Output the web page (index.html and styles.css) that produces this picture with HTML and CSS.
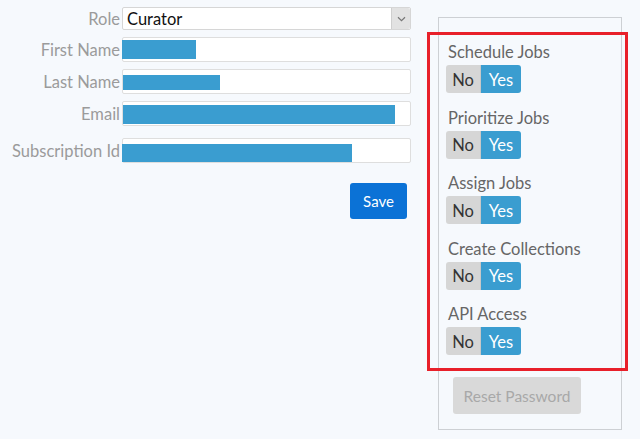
FILE: index.html
```html
<!DOCTYPE html>
<html>
<head>
<meta charset="utf-8">
<link rel="stylesheet" href="styles.css">
</head>
<body>
<div class="page">
  <div class="form">
    <div class="row">
      <div class="label">Role</div>
      <div class="field select">
        <span class="select-value">Curator</span>
        <span class="select-arrow">
          <svg width="9" height="6" viewBox="0 0 9 6"><path d="M1 1.2 L4.5 4.6 L8 1.2" fill="none" stroke="#777" stroke-width="1.2"/></svg>
        </span>
      </div>
    </div>
    <div class="row row-gap">
      <div class="label">First Name</div>
      <div class="field"><div class="bar bar-first" style="width:74px"></div></div>
    </div>
    <div class="row row-gap">
      <div class="label">Last Name</div>
      <div class="field"><div class="bar bar-last" style="width:97px"></div></div>
    </div>
    <div class="row row-gap">
      <div class="label">Email</div>
      <div class="field"><div class="bar bar-email" style="width:272px"></div></div>
    </div>
    <div class="row row-gap-lg">
      <div class="label">Subscription Id</div>
      <div class="field"><div class="bar bar-sub" style="width:230px"></div></div>
    </div>
    <button class="save">Save</button>
  </div>
  <div class="panel">
    <div class="perms">
      <div class="perm">
        <div class="perm-label">Schedule Jobs</div>
        <div class="toggle"><span class="no">No</span><span class="yes">Yes</span></div>
      </div>
      <div class="perm">
        <div class="perm-label">Prioritize Jobs</div>
        <div class="toggle"><span class="no">No</span><span class="yes">Yes</span></div>
      </div>
      <div class="perm">
        <div class="perm-label">Assign Jobs</div>
        <div class="toggle"><span class="no">No</span><span class="yes">Yes</span></div>
      </div>
      <div class="perm">
        <div class="perm-label">Create Collections</div>
        <div class="toggle"><span class="no">No</span><span class="yes">Yes</span></div>
      </div>
      <div class="perm">
        <div class="perm-label">API Access</div>
        <div class="toggle"><span class="no">No</span><span class="yes">Yes</span></div>
      </div>
    </div>
    <button class="reset">Reset Password</button>
  </div>
</div>
</body>
</html>
```

FILE: styles.css
```css
html, body {
  margin: 0;
  padding: 0;
}
body {
  background: #f6f9fd;
  font-family: Lato, "Open Sans", sans-serif;
  font-size: 16.5px;
  width: 640px;
  height: 439px;
  overflow: hidden;
}
.page {
  display: flex;
  align-items: flex-start;
}
.form {
  width: 411px;
  padding-top: 7px;
  display: flex;
  flex-direction: column;
}
.row {
  display: flex;
  align-items: center;
}
.row-gap { margin-top: 7px; }
.row-gap-lg { margin-top: 12px; }
.label {
  width: 120px;
  margin-right: 2px;
  text-align: right;
  color: #9b9b9b;
  white-space: nowrap;
  line-height: 20px;
  padding-top: 1px;
}
.field {
  box-sizing: border-box;
  width: 289px;
  height: 25px;
  background: #fff;
  border: 1px solid #dedede;
  border-radius: 2px;
  position: relative;
}
.select {
  height: 23px;
  display: flex;
  align-items: center;
  border-color: #d6d6d6;
}
.select-value {
  flex: 1;
  padding-left: 4px;
  color: #111;
  line-height: 20px;
  padding-top: 1px;
}
.select-arrow {
  width: 18px;
  height: 21px;
  background: #e2e2e2;
  border-left: 1px solid #cfcfcf;
  display: flex;
  align-items: center;
  justify-content: center;
  border-radius: 0 2px 2px 0;
}
.bar {
  background: #3a9dd0;
  margin-left: -1px;
}
.bar-first { margin-top: 2px; height: 19px; }
.bar-last { margin-top: 5px; margin-left: 0; height: 15px; }
.bar-email { margin-top: 3px; margin-left: 0; height: 19px; }
.bar-sub { margin-top: 5px; height: 18px; }
.save {
  align-self: flex-end;
  margin-top: 20px;
  margin-right: 4px;
  width: 57px;
  height: 36px;
  border: none;
  border-radius: 3px;
  background: #0b72d6;
  color: #fff;
  font-family: Lato, sans-serif;
  font-size: 15px;
  padding: 0;
}
.panel {
  box-sizing: border-box;
  margin-left: 27px;
  margin-top: 17px;
  width: 184px;
  height: 413px;
  border: 1px solid #cdd0d4;
  padding-top: 14px;
}
.perms {
  border: 3px solid #e8202a;
  margin: 0 -7px 0 -12px;
  padding: 6px 0 13px 16px;
}
.perm + .perm {
  margin-top: 13.5px;
}
.perm-label {
  color: #666;
  line-height: 20px;
  margin-left: 2px;
  margin-bottom: 4px;
  white-space: nowrap;
  padding-top: 1px;
  height: 19px;
}
.toggle {
  display: flex;
  width: 75px;
  height: 28px;
  border-radius: 3px;
  overflow: hidden;
}
.toggle span {
  display: flex;
  align-items: center;
  justify-content: center;
  line-height: 28px;
  padding-top: 1px;
  box-sizing: border-box;
}
.no {
  width: 35px;
  background: #d6d6d6;
  color: #333;
  border-right: 1px solid #c8c8c8;
}
.yes {
  width: 40px;
  background: #3a9dd0;
  color: #fff;
}
.reset {
  display: block;
  margin: 6px 0 0 14px;
  width: 128px;
  height: 37px;
  border: none;
  border-radius: 3px;
  background: #d9d9d9;
  color: #a8a8a8;
  font-family: Lato, sans-serif;
  font-size: 15.5px;
  padding: 0;
}
```
